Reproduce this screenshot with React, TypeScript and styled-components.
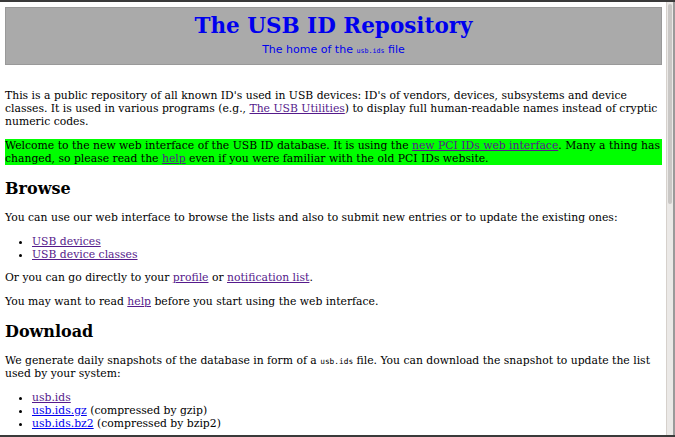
import React from "react";
import styled, { createGlobalStyle } from "styled-components";

const Global = createGlobalStyle`
  html, body { margin: 0; padding: 0; background: #fff; }
  body { overflow: hidden; }
`;

const Frame = styled.div`
  width: 675px;
  height: 437px;
  box-sizing: border-box;
  border-top: 2px solid #3a3a3a;
  border-bottom: 2px solid #3a3a3a;
  display: flex;
  overflow: hidden;
`;

const Page = styled.div`
  flex: 1;
  min-width: 0;
  padding: 5px 4px 0 5px;
  overflow: hidden;
  font-family: "DejaVu Serif", serif;
  font-size: 10.8px;
  line-height: 13px;
  color: #000;
`;

const Track = styled.div`
  width: 9px;
  flex: none;
  background: #ebe9e7;
  border-left: 1px solid #d6d1cc;
  border-right: 2px solid #9a9a9a;
  box-sizing: border-box;
  padding: 2px 1px;
`;

const Thumb = styled.div`
  height: 200px;
  background: #c9c7c5;
  border-radius: 2px;
`;

const Header = styled.div`
  height: 58px;
  box-sizing: border-box;
  background: #aaaaaa;
  border: 1px solid #999;
  text-align: center;
  padding-top: 6px;
  margin-bottom: 24px;
`;

const Title = styled.h1`
  margin: 0;
  font-family: "DejaVu Serif", serif;
  font-size: 21.5px;
  line-height: 24px;
  font-weight: bold;
  color: #0000ee;
`;

const Subtitle = styled.div`
  margin-top: 5px;
  font-family: "DejaVu Sans", sans-serif;
  font-size: 11px;
  line-height: 14px;
  color: #0000ee;
`;

const Code = styled.code<{ $tiny?: boolean }>`
  font-family: "DejaVu Sans Mono", monospace;
  font-size: ${(p) => (p.$tiny ? "6.7px" : "7.8px")};
  line-height: 1;
`;

const P = styled.p`
  margin: 0 0 10.5px;
`;

const Notice = styled.p`
  margin: 0 0 10.5px;
  background: #00ff00;
`;

const H2 = styled.h2`
  margin: 14px 0 13.5px;
  font-size: 16px;
  line-height: 19px;
  font-weight: bold;
`;

const List = styled.ul`
  margin: 0 0 10.5px;
  padding-left: 27px;
  list-style: disc;
`;

const A = styled.a<{ $visited?: boolean }>`
  color: ${(p) => (p.$visited ? "#551a8b" : "#0000ee")};
  text-decoration: underline;
`;

export default function App() {
  return (
    <>
      <Global />
      <Frame>
        <Page>
          <Header>
            <Title>The USB ID Repository</Title>
            <Subtitle>
              The home of the <Code $tiny>usb.ids</Code> file
            </Subtitle>
          </Header>
          <P>
            This is a public repository of all known ID's used in USB devices: ID's of vendors, devices,
            subsystems and device classes. It is used in various programs (e.g.,{" "}
            <A $visited href="#">The USB Utilities</A>) to display full human-readable names instead of
            cryptic numeric codes.
          </P>
          <Notice>
            Welcome to the new web interface of the USB ID database. It is using the{" "}
            <A $visited href="#">new PCI IDs web interface</A>. Many a thing has changed, so please read the{" "}
            <A $visited href="#">help</A> even if you were familiar with the old PCI IDs website.
          </Notice>
          <H2>Browse</H2>
          <P>
            You can use our web interface to browse the lists and also to submit new entries or to update the
            existing ones:
          </P>
          <List>
            <li>
              <A $visited href="#">USB devices</A>
            </li>
            <li>
              <A $visited href="#">USB device classes</A>
            </li>
          </List>
          <P>
            Or you can go directly to your <A $visited href="#">profile</A> or{" "}
            <A $visited href="#">notification list</A>.
          </P>
          <P>
            You may want to read <A $visited href="#">help</A> before you start using the web interface.
          </P>
          <H2>Download</H2>
          <P>
            We generate daily snapshots of the database in form of a <Code>usb.ids</Code> file. You can
            download the snapshot to update the list used by your system:
          </P>
          <List>
            <li>
              <A $visited href="#">usb.ids</A>
            </li>
            <li>
              <A href="#">usb.ids.gz</A> (compressed by gzip)
            </li>
            <li>
              <A href="#">usb.ids.bz2</A> (compressed by bzip2)
            </li>
          </List>
        </Page>
        <Track>
          <Thumb />
        </Track>
      </Frame>
    </>
  );
}
